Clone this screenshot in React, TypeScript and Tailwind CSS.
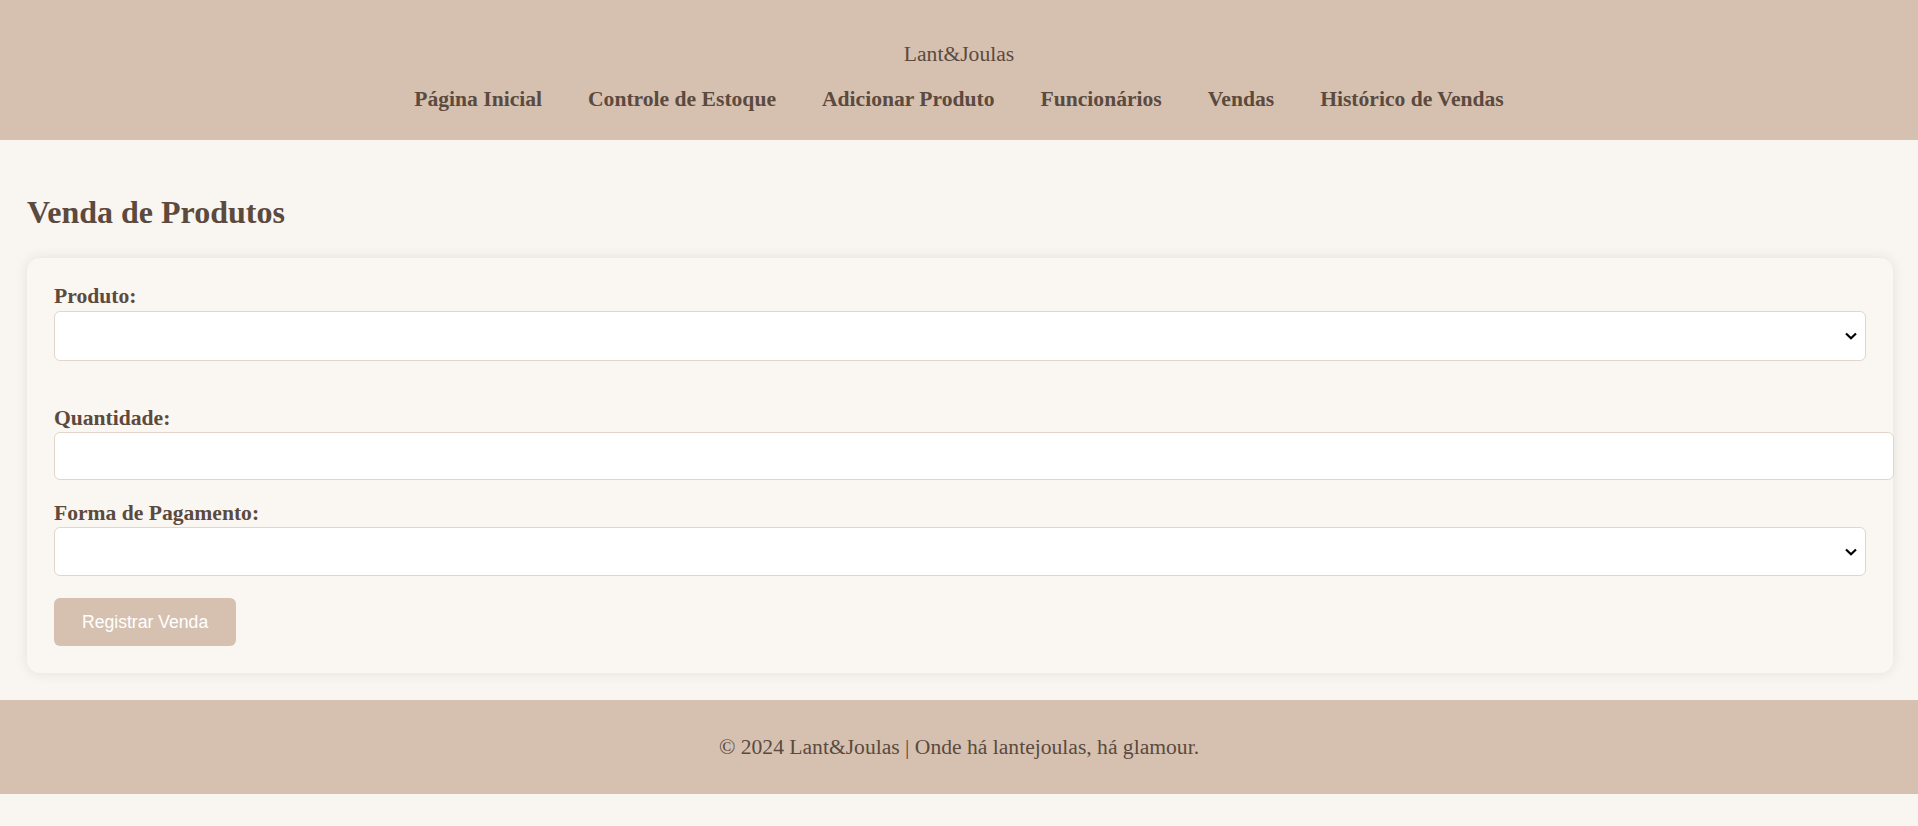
const navLinks = [
  "Página Inicial",
  "Controle de Estoque",
  "Adicionar Produto",
  "Funcionários",
  "Vendas",
  "Histórico de Vendas",
];

function Field({ label, children, className }: { label: string; children: React.ReactNode; className?: string }) {
  return (
    <div className={className}>
      <label className="block font-bold text-[21.6px] leading-[24px]">{label}</label>
      {children}
    </div>
  );
}

function Select({ h }: { h: string }) {
  return (
    <div className="relative">
      <select className={`block w-full ${h} appearance-none bg-white border border-[#e2d6ca] rounded-[6px] px-[13px] text-[18px] outline-none`}>
        <option></option>
      </select>
      {/* native-looking chevron */}
      <svg
        className="absolute right-[9px] top-1/2 -translate-y-1/2 pointer-events-none"
        width="12" height="8" viewBox="0 0 12 8"
      >
        <path d="M1 1.5 L6 6.3 L11 1.5" stroke="#000" strokeWidth="2.2" fill="none" />
      </svg>
    </div>
  );
}

export default function App() {
  return (
    <div className="min-h-[826px] bg-[#f9f5f1] text-[#5b4a3d] font-['Liberation_Serif',serif]">
      {/* Header */}
      <header className="bg-[#d6c1b1] pt-[42px] pb-[29px] flex flex-col items-center">
        <h1 className="text-[21.6px] leading-[24px] font-normal">Lant&amp;Joulas</h1>
        <nav className="mt-[21px] flex items-center gap-[46px]">
          {navLinks.map(l => (
            <a key={l} className="text-[21.6px] leading-[24px] font-bold cursor-pointer">{l}</a>
          ))}
        </nav>
      </header>

      {/* Main */}
      <main className="pl-[27px] pr-[25px] pt-[54px] pb-[27px]">
        <h2 className="text-[32px] leading-[36px] font-bold">Venda de Produtos</h2>
        <form
          className="mt-[28px] bg-[#faf6f2] rounded-[13px] shadow-[0_0_14px_rgba(0,0,0,0.09)] pt-[26px] pb-[27px] px-[27px]"
          onSubmit={e => e.preventDefault()}
        >
          <Field label="Produto:">
            <div className="mt-[3px]">
              <Select h="h-[50px]" />
            </div>
          </Field>

          <Field label="Quantidade:" className="mt-[45px]">
            <input
              type="number"
              className="mt-[2px] block box-content w-full h-[20px] py-[13px] px-[13px] bg-white border border-[#e2d6ca] rounded-[6px] outline-none"
            />
          </Field>

          <Field label="Forma de Pagamento:" className="mt-[21px]">
            <div className="mt-[2px]">
              <Select h="h-[49px]" />
            </div>
          </Field>

          <button
            type="submit"
            className="mt-[22px] h-[48px] px-[28px] bg-[#d6c1b1] text-white rounded-[6px] font-['Liberation_Sans',Arial,sans-serif] text-[17.6px]"
          >
            Registrar Venda
          </button>
        </form>
      </main>

      {/* Footer */}
      <footer className="bg-[#d6c1b1] h-[94px] flex items-center justify-center">
        <p className="text-[21.6px] leading-[24px]">© 2024 Lant&amp;Joulas | Onde há lantejoulas, há glamour.</p>
      </footer>
    </div>
  );
}
